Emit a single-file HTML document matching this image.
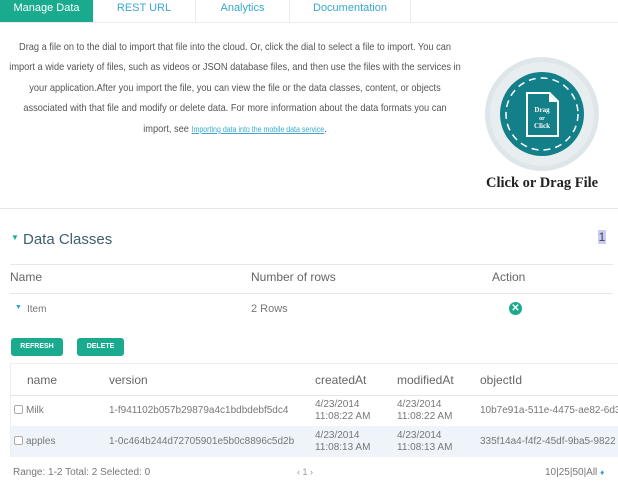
<!DOCTYPE html>
<html><head><style>
*{margin:0;padding:0;box-sizing:border-box}
body{width:618px;height:481px;overflow:hidden;background:#fff;font-family:"Liberation Sans",sans-serif;color:#555;position:relative}
.a{position:absolute;white-space:nowrap}
.tab{position:absolute;top:0;height:22px;line-height:17px;font-size:11px;color:#3aa7cf;text-align:center;border-right:1px solid #e8ecef}
.p{position:absolute;left:235px;white-space:nowrap;font-size:10.5px;color:#555;transform:translateX(-50%) scaleX(0.88);transform-origin:50% 50%}
.hr{position:absolute;height:1px;background:#e4e8ea}
.btn{position:absolute;top:338px;height:18px;background:#1aab8e;border-radius:3px;color:#fff;font-size:7px;font-weight:bold;text-align:center;line-height:18px}
.cb{display:inline-block;width:9px;height:9px;border:1px solid #aaa;border-radius:2px;vertical-align:-1px;margin-right:3px}
</style></head><body>
<div class="tab" style="left:0;width:93px;background:#1aab8e;color:#fff;border:none">Manage Data</div>
<div class="tab" style="left:93px;width:103px">REST URL</div>
<div class="tab" style="left:196px;width:94px">Analytics</div>
<div class="tab" style="left:290px;width:121px">Documentation</div>
<div class="hr" style="left:0;top:22px;width:618px;background:#e8ecef"></div>

<div class="p" style="top:41px">Drag a file on to the dial to import that file into the cloud. Or, click the dial to select a file to import. You can</div>
<div class="p" style="top:61px">import a wide variety of files, such as videos or JSON database files, and then use the files with the services in</div>
<div class="p" style="top:82px">your application.After you import the file, you can view the file or the data classes, content, or objects</div>
<div class="p" style="top:102px">associated with that file and modify or delete data. For more information about the data formats you can</div>
<div class="p" style="top:123px">import, see <span style="font-size:8px;color:#3aa7cf;text-decoration:underline">Importing data into the mobile data service</span>.</div>

<svg class="a" style="left:484px;top:56px" width="118" height="118" viewBox="0 0 118 118">
<circle cx="58" cy="58" r="57" fill="#dfe6ea"/>
<circle cx="58" cy="58" r="52" fill="#e8edf0"/>
<circle cx="58" cy="58" r="42" fill="#137f88"/>
<circle cx="58" cy="58" r="36" fill="none" stroke="#fff" stroke-width="1.5" stroke-dasharray="7 5"/>
<path d="M42 36 H66 L75 45 V81 H42 Z" fill="#fff"/>
<path d="M44 38 H65 L73 46 V79 H44 Z" fill="#137f88"/>
<path d="M65 38 V46 H73" fill="#fff"/>
<text x="58" y="56" font-family="Liberation Serif" font-size="7" font-weight="bold" fill="#fff" text-anchor="middle">Drag</text>
<text x="58" y="64" font-family="Liberation Serif" font-size="6" font-weight="bold" fill="#fff" text-anchor="middle">or</text>
<text x="58" y="72" font-family="Liberation Serif" font-size="7" font-weight="bold" fill="#fff" text-anchor="middle">Click</text>
</svg>
<div class="a" style="left:486px;top:175px;font-family:'Liberation Serif',serif;font-weight:bold;font-size:14.5px;color:#222">Click or Drag File</div>

<div class="hr" style="left:0;top:208px;width:618px"></div>
<div class="a" style="left:11px;top:233px;font-size:8px;color:#1aab8e">▼</div>
<div class="a" style="left:23px;top:231px;font-size:15px;color:#3d5f6e">Data Classes</div>
<div class="a" style="left:598px;top:230px;width:8px;height:14px;background:#c9cdf5;font-size:12px;color:#444;text-align:center">1</div>
<div class="hr" style="left:10px;top:264px;width:603px"></div>
<div class="a" style="left:10px;top:270px;font-size:12px;color:#666">Name</div>
<div class="a" style="left:251px;top:270px;font-size:12px;color:#666">Number of rows</div>
<div class="a" style="left:492px;top:270px;font-size:12px;color:#666">Action</div>
<div class="hr" style="left:10px;top:293px;width:603px"></div>
<div class="a" style="left:15px;top:304px;font-size:7px;color:#2c9fe0">▼</div>
<div class="a" style="left:27px;top:304px;font-size:10px;color:#777">Item</div>
<div class="a" style="left:251px;top:303px;font-size:11px;color:#777">2 Rows</div>
<div class="a" style="left:509px;top:302px;width:13px;height:13px;border-radius:50%;background:#1aab8e;color:#fff;font-size:10px;font-weight:bold;text-align:center;line-height:13px">✕</div>
<div class="btn" style="left:11px;width:52px">REFRESH</div>
<div class="btn" style="left:77px;width:47px">DELETE</div>

<div class="a" style="left:10px;top:363px;width:610px;height:94px;border:1px solid #eee;border-right:none"></div>
<div class="a" style="left:11px;top:426px;width:608px;height:31px;background:#eef4f9"></div>
<div class="hr" style="left:10px;top:395px;width:608px;background:#e6e6e6"></div>
<div class="a" style="left:27px;top:373px;font-size:12px;color:#666">name</div>
<div class="a" style="left:109px;top:373px;font-size:12px;color:#666">version</div>
<div class="a" style="left:315px;top:373px;font-size:12px;color:#666">createdAt</div>
<div class="a" style="left:397px;top:373px;font-size:12px;color:#666">modifiedAt</div>
<div class="a" style="left:480px;top:373px;font-size:12px;color:#666">objectId</div>

<div class="a" style="left:14px;top:405px;font-size:10px;color:#777"><span class="cb"></span>Milk</div>
<div class="a" style="left:109px;top:405px;font-size:10px;color:#777">1-f941102b057b29879a4c1bdbdebf5dc4</div>
<div class="a" style="left:315px;top:399px;font-size:10px;line-height:12px;color:#777">4/23/2014<br>11:08:22 AM</div>
<div class="a" style="left:397px;top:399px;font-size:10px;line-height:12px;color:#777">4/23/2014<br>11:08:22 AM</div>
<div class="a" style="left:480px;top:405px;font-size:10px;color:#777">10b7e91a-511e-4475-ae82-6d3</div>

<div class="a" style="left:14px;top:436px;font-size:10px;color:#777"><span class="cb" style="background:#fff"></span>apples</div>
<div class="a" style="left:109px;top:436px;font-size:10px;color:#777">1-0c464b244d72705901e5b0c8896c5d2b</div>
<div class="a" style="left:315px;top:430px;font-size:10px;line-height:12px;color:#777">4/23/2014<br>11:08:13 AM</div>
<div class="a" style="left:397px;top:430px;font-size:10px;line-height:12px;color:#777">4/23/2014<br>11:08:13 AM</div>
<div class="a" style="left:480px;top:436px;font-size:10px;color:#777">335f14a4-f4f2-45df-9ba5-9822</div>

<div class="a" style="left:13px;top:467px;font-size:10px;color:#777">Range: 1-2 Total: 2 Selected: 0</div>
<div class="a" style="left:297px;top:467px;font-size:9px;color:#999">‹ 1 ›</div>
<div class="a" style="left:545px;top:467px;font-size:10px;color:#777">10|25|50|All <span style="color:#2c9fe0;font-size:8px">♦</span></div>
</body></html>
